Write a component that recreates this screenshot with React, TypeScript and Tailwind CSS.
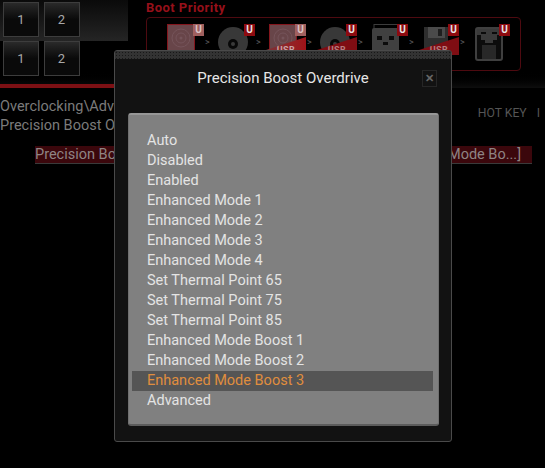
const FONT = "font-['Roboto',sans-serif]"

const options = [
  'Auto',
  'Disabled',
  'Enabled',
  'Enhanced Mode 1',
  'Enhanced Mode 2',
  'Enhanced Mode 3',
  'Enhanced Mode 4',
  'Set Thermal Point 65',
  'Set Thermal Point 75',
  'Set Thermal Point 85',
  'Enhanced Mode Boost 1',
  'Enhanced Mode Boost 2',
  'Enhanced Mode Boost 3',
  'Advanced',
]

type Kind = 'hdd' | 'disk' | 'usb' | 'floppy' | 'net'

const devices: { kind: Kind; active?: boolean; ribbon?: boolean }[] = [
  { kind: 'hdd', active: true },
  { kind: 'disk' },
  { kind: 'hdd', active: true, ribbon: true },
  { kind: 'disk', ribbon: true },
  { kind: 'usb' },
  { kind: 'floppy', ribbon: true },
  { kind: 'net' },
]

function DeviceIcon({ kind }: { kind: Kind }) {
  if (kind === 'hdd') {
    return (
      <svg width="32" height="38" viewBox="0 0 32 38">
        <rect x="0.5" y="0.5" width="27" height="37" fill="#684549" stroke="#84161d" />
        <circle cx="14" cy="14" r="9" fill="none" stroke="#75545a" />
        <circle cx="14" cy="14" r="5" fill="none" stroke="#75545a" />
        <circle cx="14" cy="14" r="1.5" fill="#75545a" />
      </svg>
    )
  }
  if (kind === 'disk') {
    return (
      <svg width="32" height="38" viewBox="0 0 32 38">
        <circle cx="15" cy="18" r="15" fill="#383838" />
        <circle cx="15" cy="20" r="5" fill="#080808" />
        <circle cx="15" cy="20" r="2" fill="#3a3a3a" />
      </svg>
    )
  }
  if (kind === 'usb') {
    return (
      <svg width="32" height="38" viewBox="0 0 32 38">
        <rect x="3" y="0.5" width="24" height="5" fill="none" stroke="#3c3c3c" />
        <rect x="1" y="4" width="27" height="34" rx="2" fill="#404040" />
        <rect x="6" y="12" width="5" height="4" fill="#0b0b0b" />
        <rect x="18" y="12" width="5" height="4" fill="#0b0b0b" />
        <rect x="12" y="18" width="5" height="3" fill="#0b0b0b" />
      </svg>
    )
  }
  if (kind === 'floppy') {
    return (
      <svg width="32" height="38" viewBox="0 0 32 38">
        <rect x="2" y="3" width="24" height="35" fill="#2e2e2e" />
        <rect x="6" y="3" width="17" height="11" fill="#4a4a4a" />
        <rect x="16" y="5" width="4" height="7" fill="#1e1e1e" />
      </svg>
    )
  }
  return (
    <svg width="32" height="40" viewBox="0 0 32 40">
      <rect x="3" y="4" width="26" height="32" rx="2" fill="#0c0c0c" stroke="#3f3f3f" strokeWidth="2" />
      <path d="M4 5h24v6h-4v5h-4v3h-8v-3H8v-5H4z" fill="#3a3a3a" />
      <rect x="8" y="8" width="5" height="2" fill="#0a0a0a" />
      <rect x="19" y="8" width="5" height="2" fill="#0a0a0a" />
      <rect x="9" y="21" width="14" height="14" fill="#282828" />
    </svg>
  )
}

function Device({ kind, active, ribbon, last }: { kind: Kind; active?: boolean; ribbon?: boolean; last: boolean }) {
  return (
    <div className="relative h-[52px] w-[51px] shrink-0 pt-[6px]">
      <DeviceIcon kind={kind} />
      {ribbon && (
        <div
          className={`absolute left-[-3px] top-[19px] flex h-[18px] w-[40px] items-end justify-center overflow-hidden text-[9px] font-bold leading-none tracking-[0.5px] [clip-path:polygon(0_72%,100%_0,100%_100%,0_100%)] ${
            active ? 'bg-gradient-to-r from-[#7c3035] to-[#a01118] text-[#c9a4a6]' : 'bg-[#7f0d13] text-[#b57c7e]'
          }`}
        >
          USB
        </div>
      )}
      <span
        className={`absolute left-[26px] top-[6px] flex h-[12px] w-[11px] items-center justify-center text-[10px] font-bold leading-none ${
          active ? 'bg-[#a0605f] text-[#d8c4c5]' : 'bg-[#8d0b10] text-[#e6e6e6]'
        }`}
      >
        U
      </span>
      {!last && <span className="absolute left-[38px] top-[20px] text-[9px] leading-none text-[#5c5c5c]">&gt;</span>}
    </div>
  )
}

function KeyButton({ label }: { label: string }) {
  return (
    <div className="flex h-[35px] w-[36px] items-center justify-center border border-[#3d3d3d] bg-gradient-to-b from-[#2a2a2a] to-[#0a0a0a] to-50% text-[13px] text-[#a8a8a8]">
      {label}
    </div>
  )
}

export default function App() {
  return (
    <div className={`relative h-[468px] w-[545px] overflow-hidden bg-black ${FONT}`}>
      <div className="h-[88px] bg-gradient-to-b from-black from-80% to-[#0e0e0e]">
        <div className="flex h-[84px]">
          <div className="relative w-[128px] shrink-0">
            <div className="absolute inset-x-0 top-0 h-[41px] bg-gradient-to-b from-[#0a0a0a] to-[#252525]" />
            <div className="relative grid w-[80px] grid-cols-2 gap-[4px] pl-[3px] pt-[2px]">
              <KeyButton label="1" />
              <KeyButton label="2" />
              <KeyButton label="1" />
              <KeyButton label="2" />
            </div>
          </div>
          <div className="ml-[18px] flex-1">
            <div className="text-[13px] font-bold leading-[15px] tracking-[0.45px] text-[#96101a]">Boot Priority</div>
            <div className="mt-[2px] flex h-[54px] w-[375px] rounded-[4px] border border-[#4e0a10] pl-[20px]">
              {devices.map((d, i) => (
                <Device key={i} kind={d.kind} active={d.active} ribbon={d.ribbon} last={i === devices.length - 1} />
              ))}
            </div>
          </div>
        </div>
        <div className="h-[4px] w-[120px] bg-[#7d1014]" />
      </div>

      <div className="flex justify-between pt-[9px] text-[#7b7b7b]">
        <div className="text-[14.5px] leading-[19px]">
          <div>Overclocking\Advanced</div>
          <div>Precision Boost Overdrive</div>
        </div>
        <div className="flex pr-[5px] pt-[8px] text-[12.2px] leading-[16px] text-[#555]">
          <span>HOT KEY</span>
          <span className="ml-[10px]">I</span>
        </div>
      </div>
      <div className="ml-[35px] mt-[11px] flex h-[18px] w-[497px] items-center justify-between border-b border-[#3a3a3a] bg-[#3b070c] pr-[11px] text-[14.5px] text-[#8f8484]">
        <span>Precision Boost Overdrive</span>
        <span>[Enhanced Mode Bo...]</span>
      </div>

      <div className="absolute left-[114px] top-[50px] h-[392px] w-[338px] rounded-[3px] border border-[#4a4a4a] bg-[#121212]">
        <div className="h-[8px] rounded-t-[3px] bg-[#333] [background-image:radial-gradient(#181818_1px,transparent_1px)] [background-size:3px_3px]" />
        <div className="relative h-[54px]">
          <div className="pt-[10px] text-center text-[15px] leading-[18px] text-[#e6e6e6]">Precision Boost Overdrive</div>
          <div className="absolute left-[307px] top-[11px] flex h-[17px] w-[15px] items-center justify-center border border-[#262626] text-[11px] font-bold leading-none text-[#666]">
            ✕
          </div>
        </div>
        <div className="ml-[13px] mr-[12px] h-[313px] rounded-[3px] border-x border-y-2 border-t-[#979797] border-b-[#5c5c5c] border-x-[#707070] bg-[#808080] pl-[3px] pr-[5px] pt-[16px]">
          {options.map((o) => (
            <div
              key={o}
              className={`h-[20px] pl-[15px] text-[14.5px] leading-[20px] ${
                o === 'Enhanced Mode Boost 3' ? 'bg-[#555] text-[#e08e3e]' : 'text-[#e4e4e4]'
              }`}
            >
              {o}
            </div>
          ))}
        </div>
      </div>
    </div>
  )
}
